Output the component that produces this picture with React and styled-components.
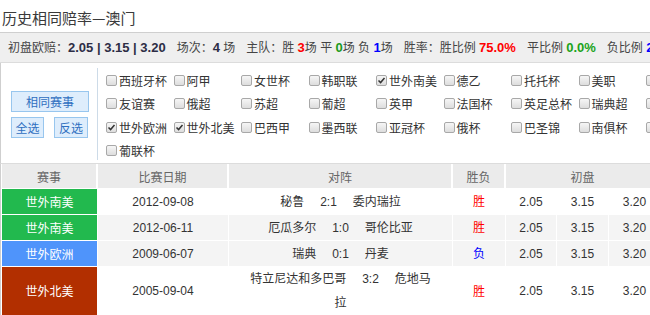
import React from 'react';
import styled, { createGlobalStyle } from 'styled-components';

const GlobalStyle = createGlobalStyle`
    body {
        margin: 0;
        background: #fff;
        overflow: hidden;
        font-family: "Liberation Sans", "Noto Sans CJK SC", sans-serif;
        font-size: 12px;
        color: #333;
    }
`;

const leagues = [
    ['西班牙杯', false], ['阿甲', false], ['女世杯', false], ['韩职联', false], ['世外南美', true],
    ['德乙', false], ['托托杯', false], ['美职', false], ['日职联', false],
    ['友谊赛', false], ['俄超', false], ['苏超', false], ['葡超', false], ['英甲', false],
    ['法国杯', false], ['英足总杯', false], ['瑞典超', false], ['澳超', false],
    ['世外欧洲', true], ['世外北美', true], ['巴西甲', false], ['墨西联', false], ['亚冠杯', false],
    ['俄杯', false], ['巴圣锦', false], ['南俱杯', false], ['智利甲', false],
    ['葡联杯', false],
];

const matches = [
    { league: '世外南美', color: '#22b94e', date: '2012-09-08', home: '秘鲁', score: '2:1', away: '委内瑞拉', result: '胜', odds: ['2.05', '3.15', '3.20'], shaded: false },
    { league: '世外南美', color: '#22b94e', date: '2012-06-11', home: '厄瓜多尔', score: '1:0', away: '哥伦比亚', result: '胜', odds: ['2.05', '3.15', '3.20'], shaded: true },
    { league: '世外欧洲', color: '#4f94fb', date: '2009-06-07', home: '瑞典', score: '0:1', away: '丹麦', result: '负', odds: ['2.05', '3.15', '3.20'], shaded: true },
    { league: '世外北美', color: '#b22f00', date: '2005-09-04', home: '特立尼达和多巴哥', score: '3:2', away: '危地马拉', result: '胜', odds: ['2.05', '3.15', '3.20'], shaded: false },
];

function App() {
    return (
        <Page>
            <GlobalStyle />
            <Title>历史相同赔率—澳门</Title>
            <StatsBar>
                初盘欧赔：<Bold>2.05 | 3.15 | 3.20</Bold>
                <Gap />场次：<Bold>4</Bold> 场
                <Gap />主队：胜 <Num $c="#f00">3</Num>场 平 <Num $c="#1a9a1a">0</Num>场 负 <Num $c="#00f">1</Num>场
                <Gap />胜率：胜比例 <Num $c="#f00">75.0%</Num>
                <Gap />平比例 <Num $c="#1aa31a">0.0%</Num>
                <Gap />负比例 <Num $c="#00f">25.0%</Num>
            </StatsBar>
            <FilterPanel>
                <ButtonCol>
                    <BlueButton $w={78}>相同赛事</BlueButton>
                    <ButtonRow>
                        <BlueButton $w={33}>全选</BlueButton>
                        <BlueButton $w={34}>反选</BlueButton>
                    </ButtonRow>
                </ButtonCol>
                <CheckGrid>
                    {leagues.map(([name, checked]) => (
                        <CheckItem key={name}>
                            <Box $checked={checked}>
                                {checked && (
                                    <svg width="9" height="9" viewBox="0 0 9 9">
                                        <path d="M1.5 4.5 L3.6 6.6 L7.5 2" fill="none" stroke="#333" strokeWidth="1.5" />
                                    </svg>
                                )}
                            </Box>
                            {name}
                        </CheckItem>
                    ))}
                </CheckGrid>
            </FilterPanel>
            <TableWrap>
                <Table>
                    <colgroup>
                        <col style={{ width: 96 }} />
                        <col style={{ width: 131 }} />
                        <col style={{ width: 224 }} />
                        <col style={{ width: 53 }} />
                        <col style={{ width: 51 }} />
                        <col style={{ width: 52 }} />
                        <col style={{ width: 52 }} />
                    </colgroup>
                    <thead>
                        <tr>
                            <Th>赛事</Th>
                            <Th>比赛日期</Th>
                            <Th>对阵</Th>
                            <Th>胜负</Th>
                            <Th colSpan={3}>初盘</Th>
                        </tr>
                    </thead>
                    <tbody>
                        {matches.map((m) => (
                            <Row key={m.date} $shaded={m.shaded}>
                                <LeagueCell $bg={m.color}>{m.league}</LeagueCell>
                                <Td>{m.date}</Td>
                                <Td>
                                    <VsText>
                                        {m.home}<Score>{m.score}</Score>{m.away}
                                    </VsText>
                                </Td>
                                <Td>
                                    <Result $win={m.result === '胜'}>{m.result}</Result>
                                </Td>
                                {m.odds.map((o, i) => (
                                    <Td key={i}>{o}</Td>
                                ))}
                            </Row>
                        ))}
                    </tbody>
                </Table>
            </TableWrap>
        </Page>
    );
}

const Page = styled.div`
    width: 900px;
`;

const Title = styled.div`
    height: 32px;
    padding-left: 2px;
    font-family: "Noto Sans CJK SC", sans-serif;
    font-size: 15px;
    line-height: 36px;
    color: #3a3a3a;
`;

const StatsBar = styled.div`
    height: 29px;
    line-height: 29px;
    padding-left: 8px;
    background: #efefef;
    border-top: 1px solid #cfcfcf;
    border-bottom: 1px solid #dcdcdc;
    color: #444;
    white-space: nowrap;
`;

const Bold = styled.b`
    font-size: 13px;
    color: #2d2d45;
`;

const Num = styled.b`
    font-size: 13px;
    color: ${(p) => p.$c};
`;

const Gap = styled.span`
    display: inline-block;
    width: 11px;
`;

const FilterPanel = styled.div`
    display: flex;
    height: 100px;
    border-left: 1px solid #cfcfcf;
    border-bottom: 1px solid #dcdcdc;
    background: #fff;
`;

const ButtonCol = styled.div`
    display: flex;
    flex-direction: column;
    justify-content: center;
    gap: 5px;
    width: 86px;
    margin: 5px 0 3px;
    padding-left: 10px;
    border-right: 1px solid #cddbe8;
`;

const ButtonRow = styled.div`
    display: flex;
    gap: 10px;
`;

const BlueButton = styled.button`
    width: ${(p) => p.$w}px;
    height: 21px;
    padding: 0;
    font-family: "Noto Sans CJK SC", sans-serif;
    font-size: 12px;
    color: #2f6fc0;
    background: #deedfc;
    border: 1px solid #98c6ee;
    cursor: pointer;
`;

const CheckGrid = styled.div`
    display: grid;
    grid-template-columns: repeat(9, 67.5px);
    grid-auto-rows: 23.3px;
    align-content: start;
    padding: 6px 0 0 8px;
`;

const CheckItem = styled.label`
    display: flex;
    align-items: center;
    gap: 2px;
    white-space: nowrap;
    color: #333;
    font-family: "Noto Sans CJK SC", sans-serif;
`;

const Box = styled.span`
    display: flex;
    align-items: center;
    justify-content: center;
    box-sizing: border-box;
    width: 11px;
    height: 11px;
    border: 1px solid #a8a8a8;
    border-radius: 2px;
    background: linear-gradient(#f6f6f6, #dddddd);
`;

const TableWrap = styled.div`
    border-left: 1px solid #cfcfcf;
    padding-left: 1px;
    width: 660px;
`;

const Table = styled.table`
    width: 659px;
    table-layout: fixed;
    border-collapse: separate;
    border-spacing: 0;
`;

const Th = styled.th`
    height: 24px;
    padding: 0;
    font-weight: normal;
    font-family: "Noto Sans CJK SC", sans-serif;
    color: #666;
    background: #ebebeb;
    border-right: 2px solid #fff;
    border-bottom: 1px solid #fff;
    text-align: center;
`;

const Row = styled.tr`
    background: ${(p) => (p.$shaded ? '#f4f4f4' : '#fff')};
`;

const Td = styled.td`
    height: 24px;
    padding: 0;
    text-align: center;
    line-height: 24px;
    color: #333;
    border-right: 1px solid #fff;
    border-bottom: 1px solid #fff;
`;

const LeagueCell = styled(Td)`
    background: ${(p) => p.$bg};
    color: #fff;
    font-family: "Noto Sans CJK SC", sans-serif;
`;

const VsText = styled.div`
    padding: 0 20px;
    font-family: "Liberation Sans", "Noto Sans CJK SC", sans-serif;
`;

const Score = styled.span`
    margin: 0 16px;
    font-size: 12px;
    color: #333;
`;

const Result = styled.span`
    font-family: "Noto Sans CJK SC", sans-serif;
    color: ${(p) => (p.$win ? '#f00' : '#00f')};
`;

export default App;
